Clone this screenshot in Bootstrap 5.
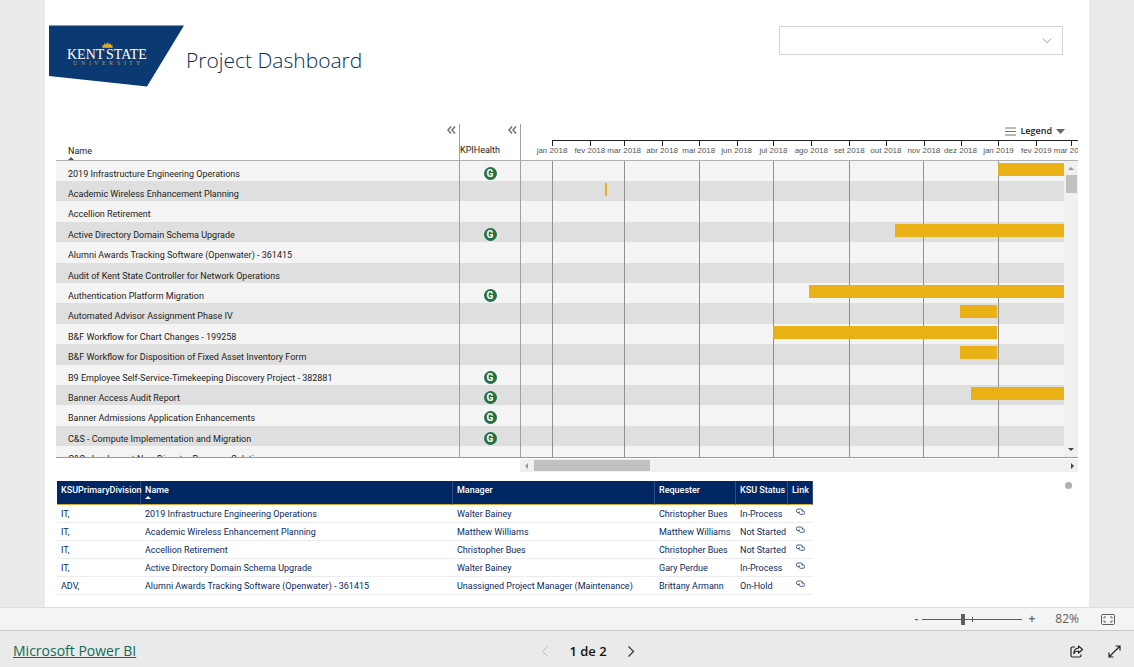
<!DOCTYPE html>
<html lang="pt">
<head>
<meta charset="utf-8">
<meta name="viewport" content="width=device-width, initial-scale=1">
<title>Project Dashboard</title>
<link href="https://cdn.jsdelivr.net/npm/bootstrap@5.3.0/dist/css/bootstrap.min.css" rel="stylesheet">
<style>
  body { font-family: Roboto, "Noto Sans", sans-serif; font-size: 9px; line-height: 12px; background: #eaeaea; color: #222; }
  .sheet { margin: 0 45px; padding: 25px 11px 0 4px; background: #fff; overflow: hidden; }
  .sheet-head { height: 99px; padding-right: 15px; }
  .report-title { font-family: "Open Sans", sans-serif; font-size: 21px; line-height: 30px; font-weight: 300; color: #0a2a5e; margin: 20px 0 0 2px; }
  .slicer { width: 284px; height: 29px; border: 1px solid #d4d4d4; border-radius: 0; font-size: 12px; padding: 2px 30px 2px 8px; margin-top: 1px;
    background-image: url("data:image/svg+xml,%3csvg xmlns='http://www.w3.org/2000/svg' viewBox='0 0 10 6'%3e%3cpath fill='none' stroke='%23999' d='M1 .7l4 4 4-4'/%3e%3c/svg%3e");
    background-size: 10px 6px; background-position: right 10px center; }

  /* Gantt */
  .gantt { margin-left: 7px; }
  .gantt-view { height: 334px; overflow: hidden; border-bottom: 1px solid #999; }
  .gantt-table { width: 100%; table-layout: fixed; border-collapse: separate; border-spacing: 0; }
  .gantt-table th { height: 37px; padding: 0; font-weight: 400; vertical-align: top; border-bottom: 1px solid #b0b0b0; }
  .gantt-table td { padding: 0; line-height: 12px; height: 20px; background: #f4f4f4; vertical-align: middle; white-space: nowrap; }
  .gantt-table tbody tr:nth-child(even) td { background: #dfdfdf; }
  .gantt-table tbody tr:nth-child(5n+3) td, .gantt-table tbody tr:nth-child(5n) td { height: 21px; }
  .gantt-table th:not(:last-child), .gantt-table td:not(:last-child) { border-right: 1px solid #a0a0a0; }
  .gantt-table td:first-child { padding: 5px 0 0 12px; }
  .col-task { width: 404px; }
  .col-kpi { width: 61px; }
  .head-cell { height: 36px; }
  .collapse-btn { line-height: 0; padding: 2px 3px 0 0; border: 0; background: none; align-self: flex-end; }
  .sort-up { width: 0; height: 0; border: 3px solid transparent; border-top: 0; border-bottom: 3px solid #555; }
  .kpi { width: 13px; height: 13px; border-radius: 50%; background: #217346; color: #fff; font-weight: 700; font-size: 10px; line-height: 13px; text-align: center; display: block; margin: 4px auto 0; }
  .legend-btn { height: 16px; border: 0; background: none; padding: 0 13px 2px 0; gap: 4px; font-family: "Open Sans", sans-serif; font-weight: 600; line-height: 14px; color: #222; margin-left: auto; }
  .months { display: grid; height: 20px; margin-left: 31px; overflow: visible; border-top: 1px solid #222;
    grid-template-columns: 31fr 28fr 31fr 30fr 31fr 30fr 31fr 31fr 30fr 31fr 30fr 31fr 31fr 28fr 6fr; }
  .months span { min-width: 0; border-left: 1px solid #222; height: 5px; }
  .months b { display: block; width: 60px; margin: 4px 0 0 -31px; font: 8px/12px "Liberation Sans", sans-serif; color: #555; text-align: center; white-space: nowrap; }
  .axis-cell { overflow: hidden; }
  .lines { display: grid; position: absolute; top: 37px; bottom: 0; left: 496px; right: 14px; pointer-events: none;
    grid-template-columns: 59fr 61fr 61fr 62fr 61fr 61fr 54fr; }
  .lines i { border-left: 1px solid #909090; }
  .lane { margin: 0 14px 4px 31px; height: 13px; }
  .bar { position: relative; z-index: 1; height: 13px; background: #eab117; min-width: 2px; }
  .vscroll { position: absolute; top: 37px; right: 0; bottom: 0; width: 14px; background: #f0f0f0; padding: 6px 1px; }
  .vthumb { width: 11px; height: 18px; background: #c1c1c1; margin: 5px auto 0; }
  .vscroll .sort-up { border-bottom-color: #999; }
  .arrow-d { width: 0; height: 0; border: 3px solid transparent; border-bottom: 0; border-top: 3px solid #444; }
  .arrow-l { border: 3px solid transparent; border-left: 0; border-right: 3px solid #999; }
  .arrow-r { border: 3px solid transparent; border-right: 0; border-left: 3px solid #444; }
  .hscroll { margin: 1px 0 0 464px; height: 13px; background: #f0f0f0; padding: 0 4px 0 5px; }
  .hthumb { width: 116px; height: 11px; background: #c1c1c1; margin-left: 6px; }

  /* Project list */
  .lower { margin-left: 8px; padding: 9px 6px 12px 0; }
  .project-table { width: 756px; table-layout: fixed; border-collapse: separate; border-spacing: 0; color: #0a2a5e; }
  .project-table th { background: #002664; color: #fff; font-weight: 500; height: 24px; padding: 3px 4px 0; vertical-align: top; border-bottom: 1px solid #d9a93a; border-right: 1px solid #2f4d80; white-space: nowrap; }
  .project-table td { height: 18px; padding: 0 4px; border-bottom: 1px solid #ececf2; white-space: nowrap; }
  .project-table .sort-up { border-bottom-color: #fff; }
  .c-div { width: 84px; } .c-name { width: 312px; } .c-mgr { width: 202px; } .c-req { width: 81px; } .c-stat { width: 52px; } .c-link { width: 25px; }
  .dot { width: 7px; height: 7px; border-radius: 50%; background: #b0b0b0; margin-top: 1px; }

  /* Bottom bars */
  .zoom-bar { height: 24px; background: #f4f4f4; border-top: 1px solid #dedede; border-bottom: 1px solid #c8c8c8; padding-right: 19px; color: #605e5c; font-family: "Open Sans", sans-serif; font-size: 12px; }
  .zoom-bar button, .foot button { border: 0; background: none; padding: 0; line-height: 1; color: inherit; }
  .zoom-bar button { font-weight: 600; }
  .zoom-range { -webkit-appearance: none; appearance: none; width: 100px; height: 12px; margin: 0 6px 0 4px;
    background: linear-gradient(#605e5c, #605e5c) center / 100% 1px no-repeat, linear-gradient(#605e5c, #605e5c) 50px center / 1px 5px no-repeat; }
  .zoom-range::-webkit-slider-thumb { -webkit-appearance: none; width: 4px; height: 11px; background: #605e5c; }
  .zoom-value { margin: 0 22px 0 20px; }
  .foot { height: 36px; padding: 3px 13px 0; display: grid; grid-template-columns: 1fr auto 1fr; align-items: center; font-family: "Open Sans", sans-serif; font-size: 14px; line-height: 18px; }
  .foot a { color: #0f6b5c; }
  .pager { margin-left: 42px; }
  .page-no { color: #111; font-weight: 600; font-size: 13px; }
</style>
</head>
<body>
<main class="sheet">
  <header class="sheet-head d-flex align-items-start">
    <svg width="135" height="62" viewBox="0 0 135 62" role="img" aria-label="Kent State University">
      <path d="M0 .5H135L98 61.500L0 51Z" fill="#0b3a73"/>
      <path d="M53.500 22.500a5 3.600 0 0 1 10 0zM53 20l2 1M55.500 18l1 2M58.500 17v2M61.500 18l-1 2M64 20l-2 1" fill="#eaab20" stroke="#eaab20" stroke-width=".6"/>
      <g fill="#fff" font-family="Liberation Serif, serif" font-size="14"><text x="18" y="34">KENT</text><text x="57" y="34">STATE</text></g>
      <text x="24 32 40 45 53 60 68 75 80 87" y="40" fill="#b39a4e" font-family="Liberation Serif, serif" font-size="6">UNIVERSITY</text>
    </svg>
    <h1 class="report-title">Project Dashboard</h1>
    <select class="form-select slicer ms-auto" aria-label="Filter"><option></option></select>
  </header>

  <section class="gantt">
    <div class="gantt-view position-relative">
      <table class="gantt-table">
        <colgroup><col class="col-task"><col class="col-kpi"><col></colgroup>
        <thead><tr>
          <th><div class="head-cell d-flex flex-column justify-content-between"><button class="collapse-btn" aria-label="Collapse"><svg width="9" height="8" viewBox="0 0 9 8"><path d="M4 .5L1 4l3 3.500M8 .5L5 4l3 3.500" fill="none" stroke="#777" stroke-width="1.600"/></svg></button><div class="ps-2 ms-1">Name<div class="sort-up"></div></div></div></th>
          <th><div class="head-cell d-flex flex-column justify-content-between pb-1"><button class="collapse-btn" aria-label="Collapse"><svg width="9" height="8" viewBox="0 0 9 8"><path d="M4 .5L1 4l3 3.500M8 .5L5 4l3 3.500" fill="none" stroke="#777" stroke-width="1.600"/></svg></button><div>KPIHealth</div></div></th>
          <th class="axis-cell"><button class="legend-btn d-flex align-items-center"><svg width="11" height="9" viewBox="0 0 11 9"><path d="M0 1h11M0 4.500h11M0 8h11" stroke="#777" stroke-width="1.200"/></svg>Legend<svg width="9" height="5" viewBox="0 0 9 5"><path d="M0 0h9L4.500 5z" fill="#666"/></svg></button>
            <div class="months"><span><b>jan 2018</b></span><span><b>fev 2018</b></span><span><b>mar 2018</b></span><span><b>abr 2018</b></span><span><b>mai 2018</b></span><span><b>jun 2018</b></span><span><b>jul 2018</b></span><span><b>ago 2018</b></span><span><b>set 2018</b></span><span><b>out 2018</b></span><span><b>nov 2018</b></span><span><b>dez 2018</b></span><span><b>jan 2019</b></span><span><b>fev 2019</b></span><span><b>mar 2019</b></span></div></th>
        </tr></thead>
        <tbody id="tasks"></tbody>
      </table>
      <div class="lines"><i></i><i></i><i></i><i></i><i></i><i></i><i></i></div>
      <div class="vscroll d-flex flex-column align-items-center"><div class="sort-up"></div><div class="vthumb"></div><div class="arrow-d mt-auto"></div></div>
    </div>
    <div class="hscroll d-flex align-items-center"><div class="arrow-l"></div><div class="hthumb"></div><div class="arrow-r ms-auto"></div></div>
  </section>

  <section class="lower d-flex justify-content-between align-items-start">
    <table class="project-table">
      <colgroup><col class="c-div"><col class="c-name"><col class="c-mgr"><col class="c-req"><col class="c-stat"><col class="c-link"></colgroup>
      <thead><tr><th>KSUPrimaryDivision</th><th>Name<div class="sort-up"></div></th><th>Manager</th><th>Requester</th><th>KSU Status</th><th>Link</th></tr></thead>
      <tbody id="projects"></tbody>
    </table>
    <div class="dot"></div>
  </section>
</main>

<div class="zoom-bar d-flex align-items-center justify-content-end">
  <button aria-label="Zoom out">-</button>
  <input class="zoom-range" type="range" min="0" max="100" value="40" aria-label="Zoom">
  <button aria-label="Zoom in">+</button>
  <span class="zoom-value">82%</span>
  <button aria-label="Fit to page"><svg class="d-block" width="14" height="11" viewBox="0 0 14 11" fill="none" stroke="#605e5c"><rect x=".5" y=".5" width="13" height="10" rx="1"/><path d="M5 3H3v1.500M9 3h2v1.500M3 6.500V8h2M11 6.500V8H9"/></svg></button>
</div>
<footer class="foot">
  <div><a href="#">Microsoft Power BI</a></div>
  <nav class="pager d-flex align-items-center" aria-label="Pages">
    <button aria-label="Previous page" disabled><svg width="8" height="11" viewBox="0 0 8 11"><path d="M6.500 .5L1.500 5.500l5 5" fill="none" stroke="#bbb"/></svg></button>
    <span class="page-no px-3 mx-1">1 de 2</span>
    <button aria-label="Next page"><svg width="8" height="11" viewBox="0 0 8 11"><path d="M1.500 .5l5 5-5 5" fill="none" stroke="#333" stroke-width="1.200"/></svg></button>
  </nav>
  <div class="d-flex justify-content-end gap-4">
    <button aria-label="Share"><svg width="14" height="13" viewBox="0 0 14 13" fill="none" stroke="#222" stroke-width="1.200"><path d="M5 2H2.500A1.500 1.500 0 0 0 1 3.500v7A1.500 1.500 0 0 0 2.500 12h7a1.500 1.500 0 0 0 1.500-1.500V9.500"/><path d="M8.500 1l4 3.500-4 3.500V6C6 6 4.700 7 3.800 8.500 4 5.500 5.500 3.300 8.500 3z" stroke-linejoin="round"/></svg></button>
    <button aria-label="Full screen"><svg width="13" height="13" viewBox="0 0 13 13" fill="none" stroke="#222" stroke-width="1.200"><path d="M1 12L12 1M7.500 1H12v4.500M1 7.500V12h4.500"/></svg></button>
  </div>
</footer>

<script src="https://cdn.jsdelivr.net/npm/bootstrap@5.3.0/dist/js/bootstrap.bundle.min.js"></script>
<script>
  // name, has KPI, start day and end day counted from 1 January 2018
  const DAYS = 419;
  const tasks = [
    ["2019 Infrastructure Engineering Operations", 1, 365, 419],
    ["Academic Wireless Enhancement Planning", 0, 43, 44],
    ["Accellion Retirement", 0],
    ["Active Directory Domain Schema Upgrade", 1, 281, 419],
    ["Alumni Awards Tracking Software (Openwater) - 361415", 0],
    ["Audit of Kent State Controller for Network Operations", 0],
    ["Authentication Platform Migration", 1, 210, 419],
    ["Automated Advisor Assignment Phase IV", 0, 334, 364],
    ["B&F Workflow for Chart Changes - 199258", 0, 181, 364],
    ["B&F Workflow for Disposition of Fixed Asset Inventory Form", 0, 334, 364],
    ["B9 Employee Self-Service-Timekeeping Discovery Project - 382881", 1],
    ["Banner Access Audit Report", 1, 343, 419],
    ["Banner Admissions Application Enhancements", 1],
    ["C&S - Compute Implementation and Migration", 1],
    ["C&S - Implement New Disaster Recovery Solution", 0]
  ];
  const pct = d => (d / DAYS * 100).toFixed(2) + "%";
  document.getElementById("tasks").innerHTML = tasks.map(([n, k, s, e]) =>
    `<tr><td>${n.replace("&", "&amp;")}</td><td>${k ? '<span class="kpi">G</span>' : ""}</td><td>${
      s ? `<div class="lane"><div class="bar" style="margin-left:${pct(s)};width:${pct(e - s)}"></div></div>` : ""}</td></tr>`).join("");

  const link = '<a href="#" aria-label="Open"><svg class="d-block mx-auto mb-1" width="9" height="7" viewBox="0 0 9 7" fill="none" stroke="#1b3a80" stroke-width=".8"><path d="M3.500 4.500H2a1.500 1.500 0 0 1 0-3.500h3a1.700 1.700 0 0 1 1.500 2"/><path d="M5.500 3H7a1.500 1.500 0 0 1 0 3.300H4.500A1.600 1.600 0 0 1 3.500 3.500"/></svg></a>';
  const projects = [
    ["IT,", "2019 Infrastructure Engineering Operations", "Walter Bainey", "Christopher Bues", "In-Process"],
    ["IT,", "Academic Wireless Enhancement Planning", "Matthew Williams", "Matthew Williams", "Not Started"],
    ["IT,", "Accellion Retirement", "Christopher Bues", "Christopher Bues", "Not Started"],
    ["IT,", "Active Directory Domain Schema Upgrade", "Walter Bainey", "Gary Perdue", "In-Process"],
    ["ADV,", "Alumni Awards Tracking Software (Openwater) - 361415", "Unassigned Project Manager (Maintenance)", "Brittany Armann", "On-Hold"]
  ];
  document.getElementById("projects").innerHTML = projects.map(r =>
    "<tr>" + [...r, link].map(c => `<td>${c}</td>`).join("") + "</tr>").join("");
</script>
</body>
</html>
